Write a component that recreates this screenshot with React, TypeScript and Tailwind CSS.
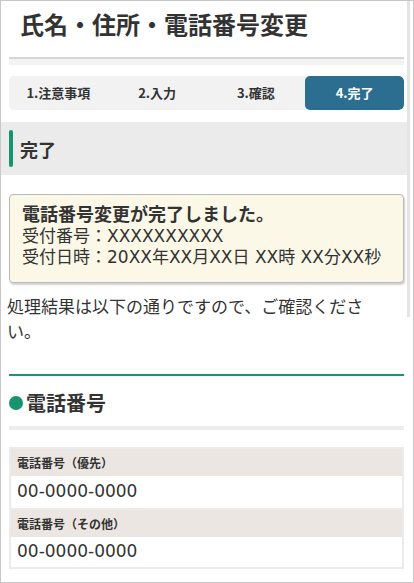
import React from "react";

const FONT = "font-['DejaVu_Sans','Noto_Sans_CJK_JP',sans-serif]";
const JP = "font-['Noto_Sans_CJK_JP',sans-serif]";

export default function App() {
  const steps = ["1.注意事項", "2.入力", "3.確認", "4.完了"];
  return (
    <div className={`relative w-[414px] h-[583px] border border-[#c8c8c8] bg-white overflow-hidden text-[#333] ${FONT}`}>
      <div className="absolute left-[406px] top-0 w-[3px] h-[316px] bg-[#e4e4e4]" />

      <h1 className={`ml-[19px] pt-[7px] text-[24px] leading-[32px] font-bold ${JP}`}>
        氏名・住所・電話番号変更
      </h1>

      <div className="ml-2 mr-[9px] mt-[17px] h-[8px] border-t-2 border-[#d6d6d6] bg-[#f3f3f3]" />

      <div className="ml-2 mr-[9px] mt-[11px] flex h-[34px] rounded-[5px] bg-[#f2f2f2] overflow-hidden">
        {steps.map((s, i) => (
          <div
            key={s}
            className={
              i === 3
                ? `flex-1 flex items-center justify-center rounded-[5px] bg-[#2b6e8f] text-white text-[13px] font-bold ${JP}`
                : `flex-1 flex items-center justify-center text-[#333] text-[13px] font-bold ${JP}`
            }
          >
            {s}
          </div>
        ))}
      </div>

      <div className="mr-[5px] mt-[12px] flex h-[53px] items-center bg-[#ebebeb]">
        <div className="ml-2 h-[37px] w-[4px] rounded-[2px] bg-[#17936f]" />
        <div className={`ml-[7px] text-[18px] font-bold leading-[24px] ${JP}`}>完了</div>
      </div>

      <div className="ml-2 mr-[9px] mt-[19px] rounded-[4px] border border-[#b9b9b9] bg-[#fbf8e7] pl-[12px] pt-[8px] pb-[14px] shadow-[1px_2px_2px_rgba(0,0,0,0.18)]">
        <div className="text-[18px] font-bold leading-[23px]">電話番号変更が完了しました。</div>
        <div className="text-[17px] leading-[21px]">受付番号：XXXXXXXXXX</div>
        <div className="text-[17px] leading-[21px]">受付日時：20XX年XX月XX日 XX時 XX分XX秒</div>
      </div>

      <p className="mt-[12px] w-[392px] pl-[6px] text-[17px] leading-[25px] [text-spacing-trim:space-all]">
        処理結果は以下の通りですので、ご確認ください。
      </p>

      <div className="ml-2 mr-[9px] mt-[29px] h-[2px] bg-[#1a9475]" />

      <div className="ml-2 mt-[12px] flex h-[30px] items-center">
        <div className="h-[14px] w-[14px] rounded-full bg-[#17936f]" />
        <div className={`ml-[3px] text-[20px] font-bold leading-[30px] ${JP}`}>電話番号</div>
      </div>

      <div className="ml-2 mr-[9px] mt-[8px] h-[4px] bg-[#eeeeee]" />

      <div className="ml-2 mr-[9px] mt-[17px] border-2 border-[#ebebeb]">
        <div className={`flex h-[27px] items-center bg-[#ebe6e2] pl-[6px] text-[12px] font-bold ${JP}`}>
          電話番号（優先）
        </div>
        <div className="flex h-[32px] items-center bg-white pl-[6px] text-[17px]">00-0000-0000</div>
        <div className={`flex h-[29px] items-center border-t-2 border-[#ebebeb] bg-[#ebe6e2] pl-[6px] text-[12px] font-bold ${JP}`}>
          電話番号（その他）
        </div>
        <div className="flex h-[30px] items-center bg-white pl-[6px] text-[17px]">00-0000-0000</div>
      </div>
    </div>
  );
}
